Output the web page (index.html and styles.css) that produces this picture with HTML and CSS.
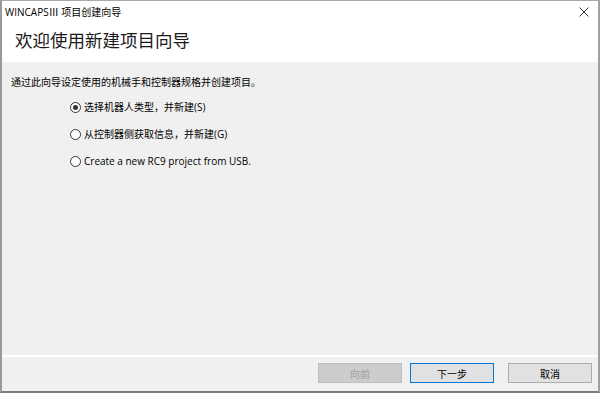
FILE: index.html
```html
<!DOCTYPE html>
<html lang="zh-CN">
<head>
    <meta charset="UTF-8">
    <title>WINCAPSⅢ 项目创建向导</title>
    <link rel="stylesheet" href="styles.css">
</head>
<body>
    <div class="window">
        <div class="title-bar">
            <span class="title">WINCAPSⅢ 项目创建向导</span>
            <svg class="close-icon" width="10" height="10" viewBox="0 0 10 10">
                <path d="M0.5 0.5 L9.5 9.5 M9.5 0.5 L0.5 9.5" stroke="#333" stroke-width="1"/>
            </svg>
        </div>
        <div class="wizard-header">
            <h1>欢迎使用新建项目向导</h1>
        </div>
        <main class="wizard-body">
            <p class="intro">通过此向导设定使用的机械手和控制器规格并创建项目。</p>
            <div class="options">
                <label class="option">
                    <span class="radio checked"></span>
                    <span>选择机器人类型，并新建(S)</span>
                </label>
                <label class="option">
                    <span class="radio"></span>
                    <span>从控制器侧获取信息，并新建(G)</span>
                </label>
                <label class="option">
                    <span class="radio"></span>
                    <span>Create a new RC9 project from USB.</span>
                </label>
            </div>
        </main>
        <div class="separator"></div>
        <footer class="wizard-footer">
            <button class="btn" disabled>向前</button>
            <button class="btn btn-default">下一步</button>
            <button class="btn btn-cancel">取消</button>
        </footer>
    </div>
</body>
</html>
```

FILE: styles.css
```css
* {
    margin: 0;
    padding: 0;
    box-sizing: border-box;
}
body {
    font-family: "Segoe UI", "Open Sans", "Noto Sans CJK SC", sans-serif;
    font-size: 10px;
    color: #000;
    background-color: #fff;
}
.window {
    width: 600px;
    height: 393px;
    display: flex;
    flex-direction: column;
    border-top: 1px solid #a8a8a8;
    border-left: 2px solid #9a9a9a;
    border-right: 2px solid #a0a0a0;
    border-bottom: 2px solid #7a7a7a;
    background-color: #f0f0f0;
}
.title-bar {
    height: 21px;
    background-color: #fff;
    display: flex;
    align-items: center;
    justify-content: space-between;
    padding: 0 9px 0 3px;
}
.title {
    line-height: 14px;
}
.close-icon {
    display: block;
}
.wizard-header {
    height: 40px;
    background-color: #fff;
    padding-left: 13px;
}
.wizard-header h1 {
    font-size: 17.5px;
    font-weight: normal;
    color: #1a1a1a;
    line-height: 36px;
}
.wizard-body {
    flex: 1;
    padding: 13px 9px 0;
}
.intro {
    line-height: 14px;
}
.options {
    display: flex;
    flex-direction: column;
    gap: 13px;
    margin: 11px 0 0 59px;
}
.option {
    display: flex;
    align-items: center;
    gap: 3px;
    line-height: 14px;
}
.radio {
    width: 11px;
    height: 11px;
    border: 1px solid #333;
    border-radius: 50%;
    background-color: #fff;
    display: flex;
    align-items: center;
    justify-content: center;
}
.radio.checked::after {
    content: "";
    width: 5px;
    height: 5px;
    border-radius: 50%;
    background-color: #333;
}
.separator {
    height: 2px;
    background-color: #fff;
}
.wizard-footer {
    height: 34px;
    display: flex;
    justify-content: flex-end;
    align-items: flex-start;
    gap: 8px;
    padding: 6px 6px 0 0;
}
.btn {
    width: 84px;
    height: 20px;
    font-family: inherit;
    font-size: 10px;
    color: #000;
    background-color: #e1e1e1;
    border: 1px solid #adadad;
    text-align: center;
}
.btn:disabled {
    background-color: #cccccc;
    border-color: #bfbfbf;
    color: #a0a0a0;
}
.btn-default {
    border-color: #0078d7;
}
.btn-cancel {
    margin-left: 6px;
}
```
